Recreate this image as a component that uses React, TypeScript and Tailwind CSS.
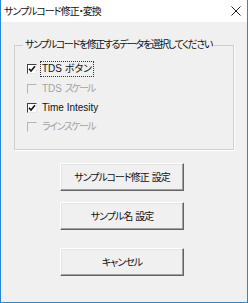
import React from "react";

const font = "font-['Liberation_Sans','Noto_Sans_CJK_JP',sans-serif] [font-feature-settings:'palt']";

function Check({
  checked,
  disabled,
  children,
  focus,
  h,
}: {
  checked?: boolean;
  disabled?: boolean;
  children: React.ReactNode;
  focus?: boolean;
  h: string;
}) {
  return (
    <div className={"flex items-center " + h}>
      <div
        className={
          "ml-[12px] flex h-[10px] w-[10px] items-center justify-center border-t border-l border-b border-r " +
          (disabled
            ? "border-t-[#b4b4b4] border-l-[#b4b4b4] border-b-[#f0f0f0] border-r-[#f0f0f0] bg-[#f0f0f0]"
            : "border-t-[#404040] border-l-[#404040] border-b-[#e8e8e8] border-r-[#e8e8e8] bg-white")
        }
      >
        {checked && (
          <svg width="8" height="8" viewBox="0 0 8 8">
            <path d="M1 3.8 L3 6 L7 1.2" fill="none" stroke="#111" strokeWidth="1.6" />
          </svg>
        )}
      </div>
      <span
        className={
          "ml-[4px] whitespace-nowrap px-[1px] text-[10px] leading-[14px] " +
          (disabled ? "text-[#a3a3a3]" : "text-[#111]") +
          (focus ? " outline outline-1 outline-dotted outline-[#333]" : "")
        }
      >
        {children}
      </span>
    </div>
  );
}

function Btn({ children, className = "" }: { children: React.ReactNode; className?: string }) {
  return (
    <button
      className={
        "ml-[59px] flex h-[28px] w-[124px] items-center justify-center whitespace-nowrap border-t border-l border-t-white border-l-white border-r border-b border-r-[#646464] border-b-[#646464] bg-[#f0f0f0] text-[10px] tracking-[-1px] text-[#111] shadow-[inset_-1px_-1px_0_#a0a0a0,inset_1px_1px_0_#e3e3e3] " +
        className
      }
    >
      {children}
    </button>
  );
}

export default function App() {
  return (
    <div className={"flex h-[303px] w-[248px] flex-col border-l border-r border-b border-[#2b86d4] bg-[#f0f0f0] " + font}>
      <div className="flex h-[22px] items-center justify-between bg-white pl-[3px] pr-[6px]">
        <span className="text-[10px] tracking-[-1px] text-[#111]">サンプルコード修正・変換</span>
        <svg width="10" height="10" viewBox="0 0 10 10">
          <path d="M0.5 0.5 L9.5 9.5 M9.5 0.5 L0.5 9.5" stroke="#222" strokeWidth="1" />
        </svg>
      </div>
      <fieldset className="ml-[13px] mt-[16px] h-[112px] w-[220px] border border-[#cfcfcf] pb-0 shadow-[1px_1px_0_#ffffff]">
        <legend className="ml-[8px] whitespace-nowrap px-[2px] text-[10px] leading-[14px] tracking-[-1.4px] text-[#111]">
          サンプルコードを修正するデータを選択してください
        </legend>
        <div className="mt-[7px] flex flex-col">
          <Check checked focus h="h-[20px]">
            TDS ボタン
          </Check>
          <Check disabled h="h-[19px]">
            TDS <span className="tracking-[-2px]">スケール</span>
          </Check>
          <Check checked h="h-[19px]">
            Time Intesity
          </Check>
          <Check disabled h="h-[20px]">
            <span className="tracking-[-1.5px]">ラインスケール</span>
          </Check>
        </div>
      </fieldset>
      <Btn className="mt-[13px]">
        サンプルコード修正<span className="ml-[3px]">設定</span>
      </Btn>
      <Btn className="mt-[11px]">
        サンプル名<span className="ml-[3px]">設定</span>
      </Btn>
      <Btn className="mt-[18px]">キャンセル</Btn>
    </div>
  );
}
